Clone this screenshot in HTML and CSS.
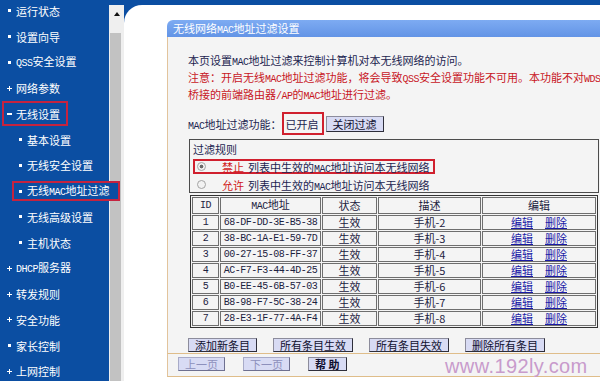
FILE: index.html
```html
<!DOCTYPE html>
<html lang="zh-CN">
<head>
<meta charset="utf-8">
<title>无线网络MAC地址过滤设置</title>
<link rel="stylesheet" href="styles.css">
</head>
<body>
<div class="left">
  <ul class="menu">
    <li class="item"><span class="b dot"></span><span>运行状态</span></li>
    <li class="item"><span class="b dot"></span><span>设置向导</span></li>
    <li class="item"><span class="b dot"></span><span><span class="en">QSS</span>安全设置</span></li>
    <li class="item"><span class="b plus"></span><span>网络参数</span></li>
    <li class="item row-hl-main"><span class="hl hl-main"><span class="b minus"></span><span>无线设置</span></span></li>
    <li class="item sub"><span class="b dot"></span><span>基本设置</span></li>
    <li class="item sub"><span class="b dot"></span><span>无线安全设置</span></li>
    <li class="item row-hl-sub"><span class="hl hl-sub"><span class="b dot"></span><span>无线<span class="en">MAC</span>地址过滤</span></span></li>
    <li class="item sub"><span class="b dot"></span><span>无线高级设置</span></li>
    <li class="item sub"><span class="b dot"></span><span>主机状态</span></li>
    <li class="item"><span class="b plus"></span><span><span class="en">DHCP</span>服务器</span></li>
    <li class="item"><span class="b plus"></span><span>转发规则</span></li>
    <li class="item"><span class="b plus"></span><span>安全功能</span></li>
    <li class="item"><span class="b dot"></span><span>家长控制</span></li>
    <li class="item"><span class="b plus"></span><span>上网控制</span></li>
  </ul>
  <div class="scrollbar">
    <div class="sb-up"><span class="arrow"></span></div>
    <div class="sb-thumb"></div>
  </div>
</div>
<div class="right">
  <div class="frame">
    <div class="panel">
      <div class="panel-head">无线网络<span class="en">MAC</span>地址过滤设置</div>
      <div class="panel-body">
        <p class="intro">本页设置<span class="en">MAC</span>地址过滤来控制计算机对本无线网络的访问。</p>
        <p class="warn">注意：开启无线<span class="en">MAC</span>地址过滤功能，将会导致<span class="en">QSS</span>安全设置功能不可用。本功能不对<span class="en">WDS</span></p>
        <p class="warn">桥接的前端路由器<span class="en">/AP</span>的<span class="en">MAC</span>地址进行过滤。</p>
        <div class="macrow">
          <span class="label"><span class="en">MAC</span>地址过滤功能：</span>
          <span class="state">已开启</span>
          <button class="btn btn-tall">关闭过滤</button>
        </div>
        <div class="rules">
          <div class="legend">过滤规则</div>
          <div class="rule rule-sel"><span class="radio checked"></span><span class="act">禁止</span><span>列表中生效的<span class="en">MAC</span>地址访问本无线网络</span></div>
          <div class="rule"><span class="radio"></span><span class="act">允许</span><span>列表中生效的<span class="en">MAC</span>地址访问本无线网络</span></div>
        </div>
        <table class="list">
          <colgroup><col class="c-id"><col class="c-mac"><col class="c-st"><col class="c-desc"><col class="c-edit"></colgroup>
          <thead>
            <tr><th class="num">ID</th><th><span class="en">MAC</span>地址</th><th>状态</th><th>描述</th><th>编辑</th></tr>
          </thead>
          <tbody>
            <tr><td class="num">1</td><td class="mac">68-DF-DD-3E-B5-38</td><td>生效</td><td>手机-2</td><td><a class="lnk">编辑</a><a class="lnk">删除</a></td></tr>
            <tr><td class="num">2</td><td class="mac">38-BC-1A-E1-59-7D</td><td>生效</td><td>手机-3</td><td><a class="lnk">编辑</a><a class="lnk">删除</a></td></tr>
            <tr><td class="num">3</td><td class="mac">00-27-15-08-FF-37</td><td>生效</td><td>手机-4</td><td><a class="lnk">编辑</a><a class="lnk">删除</a></td></tr>
            <tr><td class="num">4</td><td class="mac">AC-F7-F3-44-4D-25</td><td>生效</td><td>手机-5</td><td><a class="lnk">编辑</a><a class="lnk">删除</a></td></tr>
            <tr><td class="num">5</td><td class="mac">B0-EE-45-6B-57-03</td><td>生效</td><td>手机-6</td><td><a class="lnk">编辑</a><a class="lnk">删除</a></td></tr>
            <tr><td class="num">6</td><td class="mac">B8-98-F7-5C-38-24</td><td>生效</td><td>手机-7</td><td><a class="lnk">编辑</a><a class="lnk">删除</a></td></tr>
            <tr><td class="num">7</td><td class="mac">28-E3-1F-77-4A-F4</td><td>生效</td><td>手机-8</td><td><a class="lnk">编辑</a><a class="lnk">删除</a></td></tr>
          </tbody>
        </table>
        <div class="actions">
          <button class="btn">添加新条目</button>
          <button class="btn">所有条目生效</button>
          <button class="btn">所有条目失效</button>
          <button class="btn">删除所有条目</button>
        </div>
      </div>
      <div class="panel-foot">
        <button class="btn disabled">上一页</button>
        <button class="btn disabled">下一页</button>
        <button class="btn help">帮 助</button>
      </div>
    </div>
  </div>
</div>
<div class="watermark">www.192ly.com</div>
</body>
</html>
```
FILE: styles.css
```css
* { box-sizing: border-box; margin: 0; padding: 0; }
html, body { width: 600px; height: 381px; overflow: hidden; }
body {
  display: flex;
  position: relative;
  background: #0b4ea2;
  font-family: "Noto Sans CJK SC", "Liberation Sans", sans-serif;
  font-size: 11px;
}
.en {
  font-family: "Liberation Mono", monospace;
  font-size: 10px;
  letter-spacing: -0.5px;
}

/* ---------- left menu ---------- */
.left { width: 124px; flex: none; display: flex; background: #0b4ea2; }
.menu {
  list-style: none;
  width: 109px;
  flex: none;
  margin-top: -2px;
  color: #fff;
  position: relative;
  z-index: 1;
}
.item {
  height: 25.75px;
  display: flex;
  align-items: center;
  padding-left: 7px;
  white-space: nowrap;
  line-height: 14px;
}
.item.sub { padding-left: 18px; }
.b {
  display: inline-block;
  flex: none;
  width: 5px;
  height: 5px;
  margin-right: 4px;
  background-repeat: no-repeat;
}
.dot { background-image: linear-gradient(#fff, #fff); background-size: 3px 3px; background-position: center; }
.plus {
  background-image: linear-gradient(#fff, #fff), linear-gradient(#fff, #fff);
  background-size: 5px 1px, 1px 5px;
  background-position: center, center;
}
.minus { background-image: linear-gradient(#fff, #fff); background-size: 5px 2px; background-position: center; }
.hl {
  display: flex;
  align-items: center;
  border: 2px solid #c5233f;
  background: #0b4ea2;
}
.row-hl-main { padding-left: 2px; }
.hl-main { height: 25px; padding: 0 6px 0 3px; }
.row-hl-sub { padding-left: 12px; }
.hl-sub { height: 20px; padding: 0 8px 0 4px; }

.scrollbar {
  width: 15px;
  flex: none;
  margin-top: 5px;
  background: #efefef;
  display: flex;
  flex-direction: column;
}
.sb-up { height: 28px; display: flex; justify-content: center; align-items: flex-start; padding-top: 7px; }
.arrow {
  width: 0; height: 0;
  border-left: 3px solid transparent;
  border-right: 3px solid transparent;
  border-bottom: 4px solid #111;
}
.sb-thumb { flex: 1; margin: 0 3px 0 1px; background: #c2c2c2; }

/* ---------- right frame ---------- */
.right { flex: 1; min-width: 0; padding-top: 5px; background: #0b4ea2; }
.frame {
  height: 100%;
  background: #fff;
  border-top-left-radius: 18px;
  padding: 15px 0 0 43px;
  overflow: hidden;
}
.panel { width: 445px; }
.panel-head {
  height: 17px;
  line-height: 17px;
  padding-left: 6px;
  color: #fff;
  background: linear-gradient(#7dabf2, #6394e6);
  border-top-left-radius: 6px;
}
.panel-body {
  background: #f4f4f4;
  border-left: 1px solid #e2c49c;
  padding: 16px 0 1px 20px;
  color: #1c2450;
}
.intro, .warn { line-height: 15px; white-space: nowrap; }
.warn { color: #c8161e; }

.macrow { margin-top: 8px; height: 23px; display: flex; align-items: center; white-space: nowrap; }
.state {
  height: 23px;
  border: 2px solid #d0202e;
  padding: 0 3px 0 2px;
  display: flex;
  align-items: center;
  margin-right: 2px;
}

.btn {
  display: inline-block;
  height: 14px;
  line-height: 12px;
  padding: 0 6px;
  border: 1px solid;
  border-color: #8c8c9c #2e2e3a #2e2e3a #8c8c9c;
  background: #d8dbf4;
  color: #101030;
  font-family: inherit;
  font-size: 11px;
  white-space: nowrap;
}
.btn-tall { height: 16px; line-height: 14px; }
.btn.disabled { color: #8d90bc; border-color: #a8abc8 #6e7090 #6e7090 #a8abc8; }
.btn.help { font-weight: bold; padding: 0 6px; }

.rules {
  margin: 4px 0 0 1px;
  width: 410px;
  height: 54px;
  border: 1px solid #4c4c4c;
  padding: 2px 0 0 3px;
}
.legend { line-height: 14px; }
.rule {
  display: flex;
  align-items: center;
  width: fit-content;
  height: 15px;
  margin-top: 3px;
  border: 2px solid transparent;
  padding: 0 3px 0 2px;
  white-space: nowrap;
}
.rule-sel { border-color: #d0202e; }
.radio {
  width: 9px; height: 9px;
  border: 1px solid #a4a4a4;
  border-radius: 50%;
  background: #f2f2f2;
  margin-right: 16px;
  flex: none;
}
.radio.checked { background: radial-gradient(circle, #6a6a6a 0 1.6px, #f2f2f2 2.2px); }
.act { color: #d01818; margin-right: 4px; }

.list {
  margin: 2px 0 0 2px;
  width: 408px;
  table-layout: fixed;
  border: 1px solid #333;
  border-spacing: 1px;
  background: #f4f4f4;
}
.c-id { width: 27px; }
.c-mac { width: 101px; }
.c-st { width: 55px; }
.c-desc { width: 103px; }
.c-edit { width: 114px; }
.list th, .list td {
  height: 15px;
  padding: 0;
  border: 1px solid #6e6e6e;
  text-align: center;
  font-weight: normal;
  line-height: 13px;
  color: #1c2240;
  white-space: nowrap;
}
.list .mac, .list .num {
  font-family: "Liberation Mono", monospace;
  font-size: 10px;
  letter-spacing: -0.5px;
}
.lnk { color: #1b1ba6; text-decoration: underline; margin: 0 6px; cursor: pointer; }

.actions { margin-top: 10px; display: flex; gap: 16px; }

.panel-foot {
  display: flex;
  gap: 18px;
  padding: 3px 0 5px 10px;
  background: #f4f4f4;
  border-left: 1px solid #e2c49c;
  border-top: 1px solid #dfbd8a;
  border-bottom: 1px solid #dfbd8a;
}

.watermark {
  position: absolute;
  left: 445px;
  top: 356px;
  font-family: "Liberation Sans", Arial, sans-serif;
  font-size: 20px;
  line-height: 20px;
  letter-spacing: 0.4px;
  color: #c89bcc;
  white-space: nowrap;
}
```
